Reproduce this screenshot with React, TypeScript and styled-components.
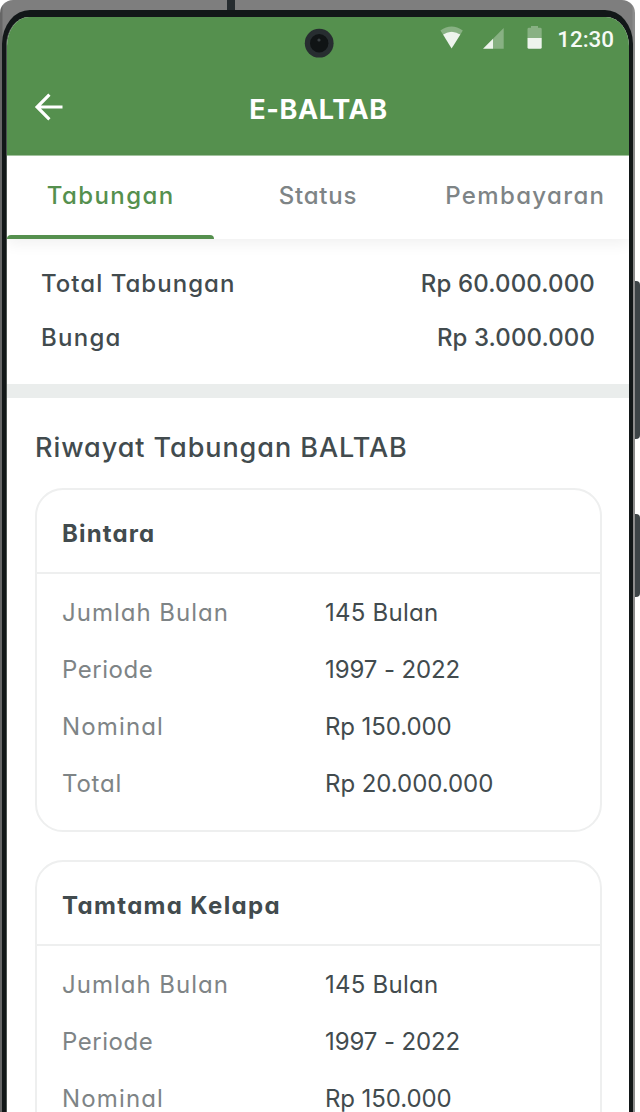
import styled, { createGlobalStyle } from "styled-components";

const GlobalStyle = createGlobalStyle`
  * { box-sizing: border-box; }
  body { margin: 0; background: #fff; overflow: hidden; }
`;

const Stage = styled.div`
  position: relative;
  width: 640px;
  height: 1112px;
  overflow: hidden;
  background: #fff;
  font-family: Inter, "Open Sans", sans-serif;
  font-size: 24px;
  font-feature-settings: "cv11";
  color: #424b4e;
`;

const PhoneBody = styled.div`
  width: 635px;
  height: 1200px;
  padding: 10px 2px 0;
  border-radius: 13px 13px 0 0;
  background: linear-gradient(90deg, #666 0, #666 2px, #7e7e7e 3px, #7e7e7e 632px, #8c8c8c 633px, #8c8c8c);
`;

const Bezel = styled.div`
  height: 100%;
  padding: 7px 4px 0 4px;
  border-radius: 28px 28px 0 0 / 34px 34px 0 0;
  background: #121718;
`;

const Screen = styled.div`
  height: 100%;
  border-left: 1px solid #4c5350;
  border-radius: 23px 23px 0 0 / 29px 29px 0 0;
  background: #fff;
  overflow: hidden;
`;

const Antenna = styled.div`
  position: absolute;
  left: 227px;
  top: 0;
  width: 8px;
  height: 10px;
  background: #262c2f;
`;

const SideKey = styled.div<{ $top: number; $length: number }>`
  position: absolute;
  left: 635px;
  top: ${(p) => p.$top}px;
  width: 5px;
  height: ${(p) => p.$length}px;
  border-radius: 0 4px 4px 0;
  background: #3d4447;
`;

const Camera = styled.svg`
  position: absolute;
  left: 304px;
  top: 28px;
`;

const Header = styled.header`
  height: 139px;
  background: #55904e;
  border-bottom: 1px solid #a4c5a0;
`;

const StatusBar = styled.div`
  display: flex;
  justify-content: flex-end;
  height: 44px;
  padding: 7px 15px 0 0;
`;

const Clock = styled.span`
  margin-left: 13px;
  font: 500 22.4px/30px Roboto, sans-serif;
  color: #f6faf6;
`;

const TitleBar = styled.div`
  display: grid;
  grid-template-columns: 80px 1fr 80px;
  align-items: center;
  height: 94px;
  padding-top: 2px;
`;

const BackButton = styled.button`
  display: flex;
  margin: 0;
  padding: 0 0 4px 27px;
  border: 0;
  background: none;
`;

const Title = styled.h1<{ $track: number }>`
  margin: 0;
  padding-top: 1px;
  padding-left: 1px;
  font-size: 27px;
  font-weight: 700;
  text-align: center;
  letter-spacing: ${(p) => p.$track}px;
  color: #fff;
`;

const Tabs = styled.nav`
  position: relative;
  display: grid;
  grid-template-columns: repeat(3, 1fr);
  height: 83px;
  box-shadow: 0 5px 14px rgba(0, 0, 0, 0.06);
`;

const Tab = styled.div<{ $active?: boolean; $track: number }>`
  display: flex;
  flex-direction: column;
  align-items: center;
  justify-content: space-between;
  font-weight: 500;
  line-height: 79px;
  letter-spacing: ${(p) => p.$track}px;
  white-space: nowrap;
  color: ${(p) => (p.$active ? "#55904e" : "#7e8486")};
`;

const Indicator = styled.span`
  width: 100%;
  height: 4px;
  border-radius: 4px 4px 0 0;
  background: #55904e;
`;

const Summary = styled.section`
  height: 145px;
  padding: 18px 34px 0 34px;
`;

const SummaryRow = styled.div`
  display: flex;
  justify-content: space-between;
  font-weight: 500;
  line-height: 54px;
`;

const Tracked = styled.span<{ $track: number }>`
  letter-spacing: ${(p) => p.$track}px;
  white-space: nowrap;
`;

const Separator = styled.div`
  height: 14px;
  background: #eaedec;
`;

const History = styled.section`
  padding: 31px 27px 0 28px;
`;

const Heading = styled.h2`
  margin: 0 0 21px;
  font-size: 27px;
  font-weight: 500;
  line-height: 38px;
  letter-spacing: 0.94px;
  white-space: nowrap;
`;

const Card = styled.article`
  height: 344px;
  margin-bottom: 28px;
  border: 2px solid #eeefef;
  border-radius: 28px;
`;

const CardTitle = styled.h3<{ $track: number }>`
  height: 84px;
  margin: 0;
  padding: 2px 25px 0;
  border-bottom: 2px solid #eeefef;
  font-size: 24px;
  font-weight: 700;
  line-height: 84px;
  letter-spacing: ${(p) => p.$track}px;
`;

const Details = styled.dl`
  margin: 0;
  padding: 10px 25px 0;
`;

const DetailRow = styled.div`
  display: grid;
  grid-template-columns: 263px 1fr;
  line-height: 57px;
`;

const Label = styled.dt<{ $track: number }>`
  letter-spacing: ${(p) => p.$track}px;
  color: #7e8486;
`;

const Value = styled.dd<{ $track: number }>`
  margin: 0;
  letter-spacing: ${(p) => p.$track}px;
`;

const details = [
  { label: "Jumlah Bulan", labelTrack: 1, value: "145 Bulan", valueTrack: 0.25 },
  { label: "Periode", labelTrack: 0.55, value: "1997 - 2022", valueTrack: -0.1 },
  { label: "Nominal", labelTrack: 1.15, value: "Rp 150.000", valueTrack: -0.1 },
  { label: "Total", labelTrack: 0.8, value: "Rp 20.000.000", valueTrack: -0.05 },
];

function SavingsCard({ title, track }: { title: string; track: number }) {
  return (
    <Card>
      <CardTitle $track={track}>{title}</CardTitle>
      <Details>
        {details.map((d) => (
          <DetailRow key={d.label}>
            <Label $track={d.labelTrack}>{d.label}</Label>
            <Value $track={d.valueTrack}>{d.value}</Value>
          </DetailRow>
        ))}
      </Details>
    </Card>
  );
}

function StatusIcons() {
  return (
    <svg width="104" height="28" viewBox="0 0 104 28" fill="#fff">
      <path d="M0.4 6.6Q11.5-1.6 22.8 6.6L20.4 10.4Q11.5 5 3 10.4Z" fillOpacity=".3" />
      <path d="M3 10.4Q11.5 5 20.4 10.4L11.6 24.4Z" fillOpacity=".9" />
      <path d="M63.7 4V24.7H53V14.7Z" fillOpacity=".3" />
      <path d="M53 14.7V24.7H43Z" fillOpacity=".9" />
      <path d="M87.5 14V5.2Q87.5 3.8 89 3.8H91V2H98V3.8H100.2Q101.7 3.8 101.7 5.2V14Z" fillOpacity=".3" />
      <path d="M87.5 14H101.7V23.2Q101.7 24.7 100.2 24.7H89Q87.5 24.7 87.5 23.2Z" fillOpacity=".9" />
    </svg>
  );
}

export default function App() {
  return (
    <Stage>
      <GlobalStyle />
      <PhoneBody>
        <Bezel>
          <Screen>
            <Header>
              <StatusBar>
                <StatusIcons />
                <Clock>12:30</Clock>
              </StatusBar>
              <TitleBar>
                <BackButton aria-label="Kembali">
                  <svg width="30" height="30" viewBox="0 0 30 30" fill="none" stroke="#fff" strokeWidth="3.2">
                    <path d="M28.5 15H4M15.4 2.7L3.1 15L15.4 27.3" />
                  </svg>
                </BackButton>
                <Title $track={0.6}>E-BALTAB</Title>
              </TitleBar>
            </Header>
            <Tabs>
              <Tab $active $track={1.4}>
                Tabungan
                <Indicator />
              </Tab>
              <Tab $track={0.75}>Status</Tab>
              <Tab $track={1.35}>Pembayaran</Tab>
            </Tabs>
            <Summary>
              <SummaryRow>
                <Tracked $track={1.03}>Total Tabungan</Tracked>
                <Tracked $track={0.15}>Rp 60.000.000</Tracked>
              </SummaryRow>
              <SummaryRow>
                <Tracked $track={1.25}>Bunga</Tracked>
                <Tracked $track={0.1}>Rp 3.000.000</Tracked>
              </SummaryRow>
            </Summary>
            <Separator />
            <History>
              <Heading>Riwayat Tabungan BALTAB</Heading>
              <SavingsCard title="Bintara" track={1.15} />
              <SavingsCard title="Tamtama Kelapa" track={1.35} />
            </History>
          </Screen>
        </Bezel>
      </PhoneBody>
      <Antenna />
      <Camera width="30" height="30" viewBox="0 0 30 30">
        <circle cx="15.2" cy="15.2" r="14.4" fill="#272d30" />
        <circle cx="15.2" cy="15.2" r="9.2" fill="#101415" />
        <circle cx="15" cy="12" r="1.6" fill="#3a4043" />
      </Camera>
      <SideKey $top={281} $length={158} />
      <SideKey $top={514} $length={83} />
    </Stage>
  );
}
